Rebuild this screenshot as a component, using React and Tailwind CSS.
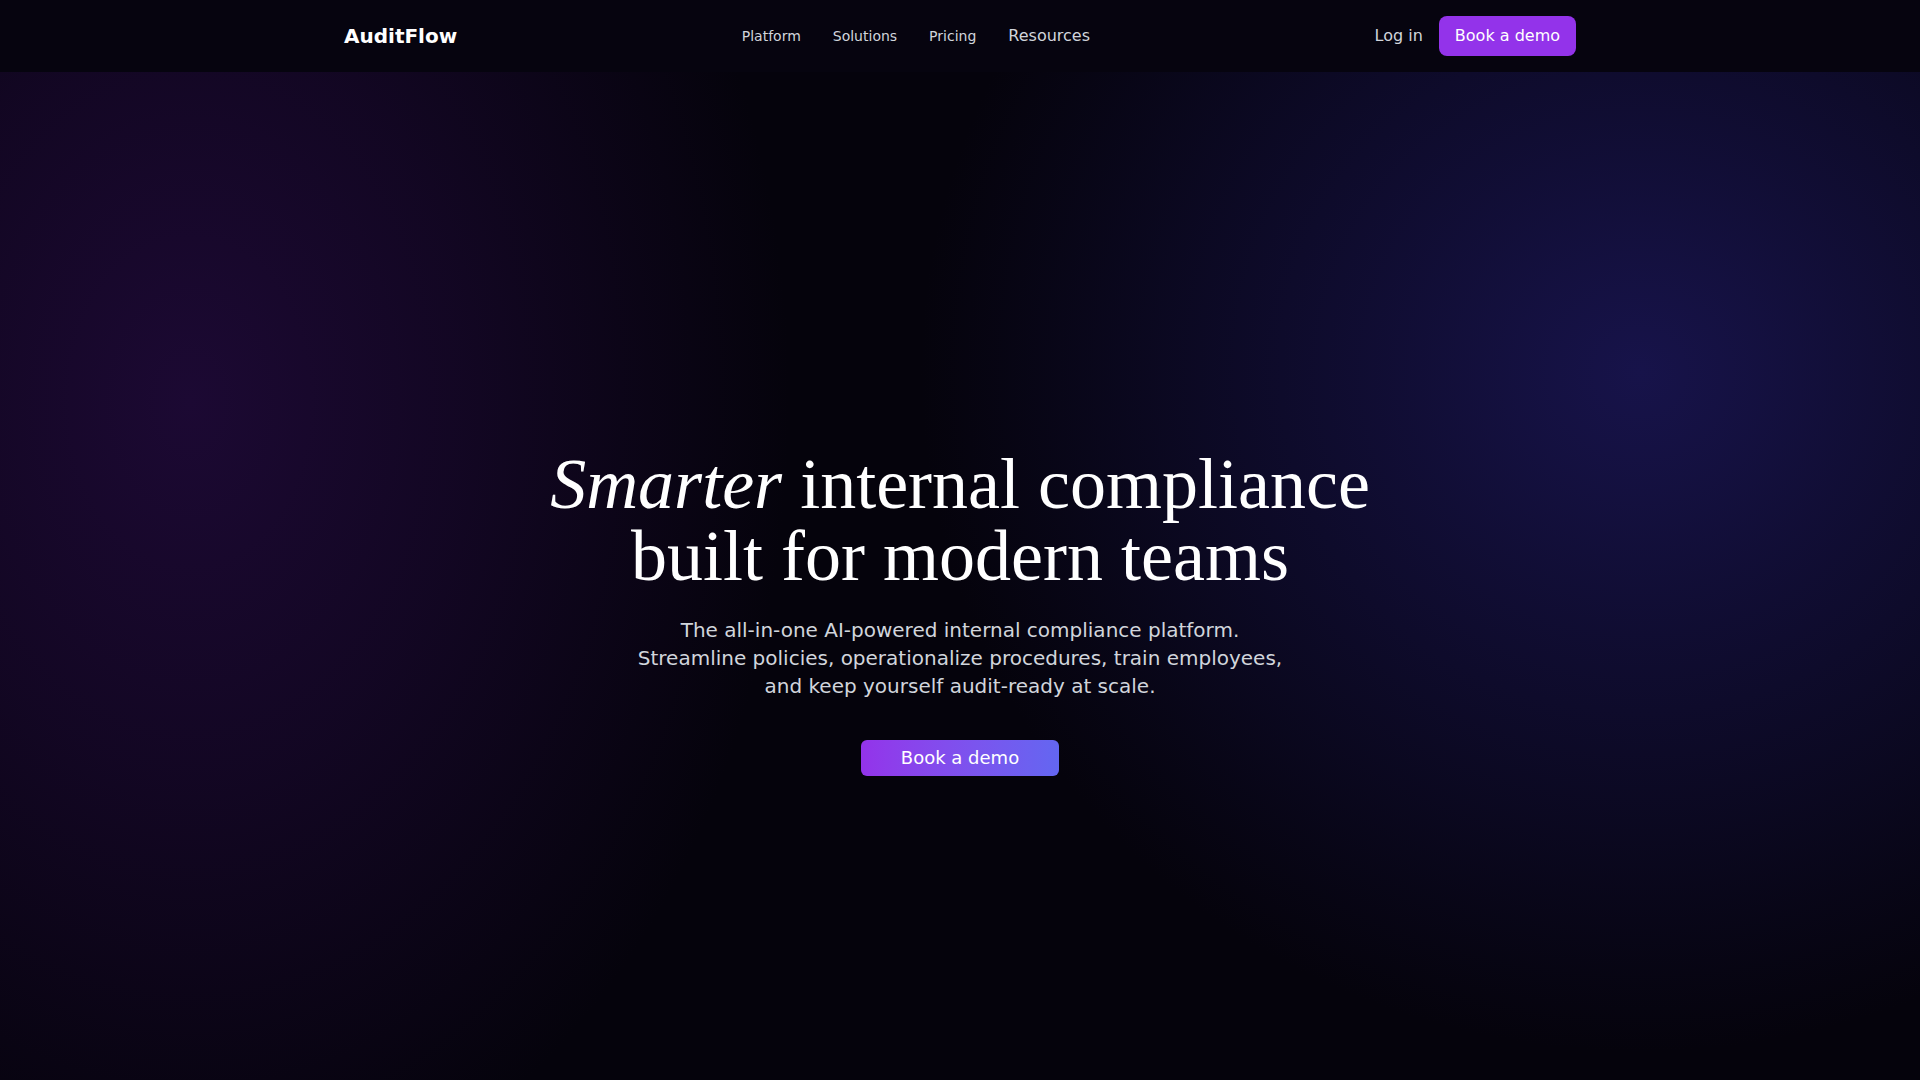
import React from 'react';

const navLinks = [
  { label: 'Platform', size: 'text-sm' },
  { label: 'Solutions', size: 'text-sm' },
  { label: 'Pricing', size: 'text-sm' },
  { label: 'Resources', size: 'text-base' },
];

const Header = () => (
  <header className="bg-[#06040f]">
    <div className="max-w-7xl mx-auto px-6 py-4 flex items-center justify-between">
      <a href="#" className="text-xl font-bold text-white">AuditFlow</a>
      <nav className="flex items-center gap-8">
        {navLinks.map((link) => (
          <a key={link.label} href="#" className={`${link.size} text-gray-300 hover:text-white`}>
            {link.label}
          </a>
        ))}
      </nav>
      <div className="flex items-center gap-4">
        <a href="#" className="text-base text-gray-300 hover:text-white">Log in</a>
        <button className="px-4 py-2 rounded-lg bg-[#9333ea] text-white text-base hover:bg-[#7e22ce]">
          Book a demo
        </button>
      </div>
    </div>
  </header>
);

const Hero = () => (
  <section className="min-h-screen flex items-center justify-center bg-[#05030c] bg-[radial-gradient(600px_820px_at_190px_330px,#1c0933_0%,rgba(28,9,51,0.6)_45%,transparent_100%),radial-gradient(720px_680px_at_1640px_300px,#17134a_0%,rgba(23,19,74,0.55)_45%,transparent_100%)]">
    <div className="text-center px-6">
      <h1 className="text-7xl text-white font-['Liberation_Serif',serif]">
        <em>Smarter</em> internal compliance
        <br />
        built for modern teams
      </h1>
      <p className="mt-6 text-xl text-gray-300">
        The all-in-one AI-powered internal compliance platform.
        <br />
        Streamline policies, operationalize procedures, train employees,
        <br />
        and keep yourself audit-ready at scale.
      </p>
      <button className="mt-10 px-10 py-1 rounded-md text-lg text-white bg-gradient-to-r from-[#9333ea] to-[#6366f1]">
        Book a demo
      </button>
    </div>
  </section>
);

export default function App() {
  return (
    <div className="font-['DejaVu_Sans',sans-serif] bg-[#05030c]">
      <Header />
      <Hero />
    </div>
  );
}
